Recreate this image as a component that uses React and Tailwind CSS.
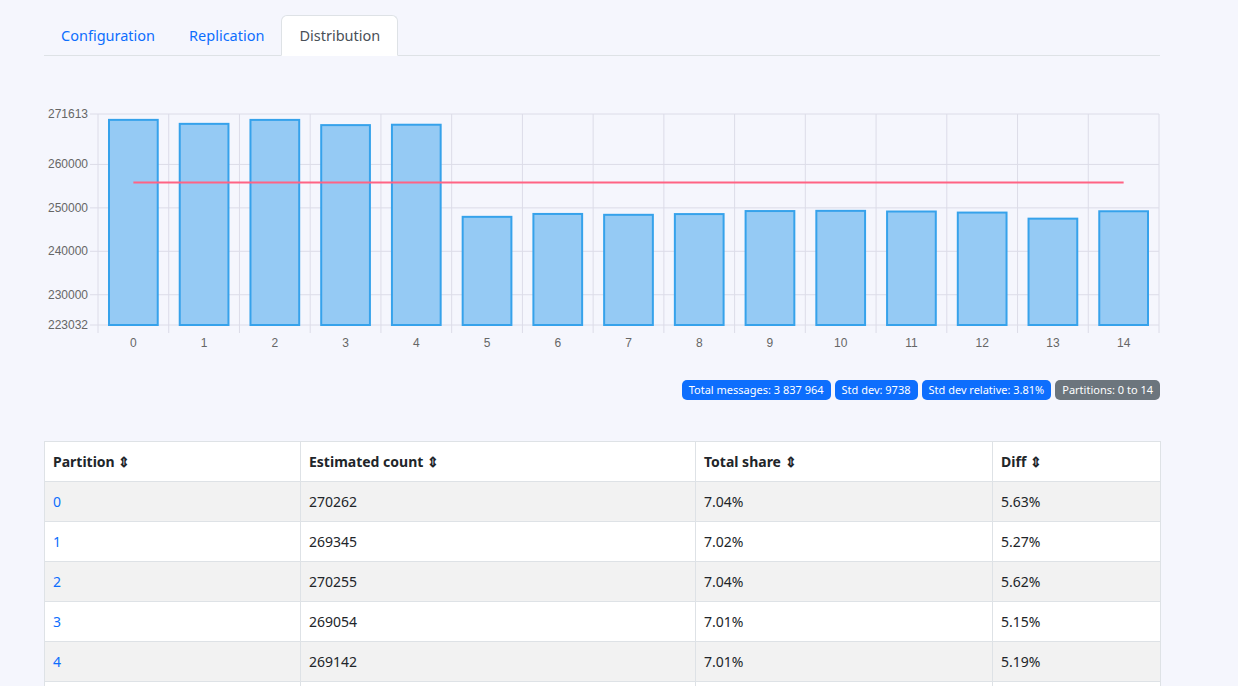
import React from "react";

const rows = [
  [270262, "7.04%", "5.63%"], [269345, "7.02%", "5.27%"], [270255, "7.04%", "5.62%"],
  [269054, "7.01%", "5.15%"], [269142, "7.01%", "5.19%"], [247935, "6.46%", "-3.10%"],
  [248602, "6.48%", "-2.84%"], [248402, "6.47%", "-2.92%"], [248571, "6.48%", "-2.85%"],
  [249268, "6.49%", "-2.58%"], [249313, "6.50%", "-2.56%"], [249160, "6.49%", "-2.62%"],
  [248918, "6.49%", "-2.71%"], [247518, "6.45%", "-3.26%"], [249219, "6.49%", "-2.60%"],
];

const X0 = 54, X1 = 1115, YT = 14, YB = 225;
const vmin = 223032, vmax = 271613;
const yv = (v) => YB - ((v - vmin) / (vmax - vmin)) * (YB - YT);
const cw = (X1 - X0) / 15;

function Chart() {
  const ticks = [271613, 260000, 250000, 240000, 230000, 223032];
  const mean = 3837964 / 15;
  return (
    <svg width="1116" height="250" className="block" style={{ fontFamily: '"Liberation Sans", Arial, sans-serif' }}>
      {ticks.map((t) => (
        <g key={t}>
          <line x1={X0 - 8} x2={X1} y1={yv(t)} y2={yv(t)} stroke="#dcdce8" />
          <text x={X0 - 10} y={yv(t) + 4} textAnchor="end" fontSize="12" fill="#666">{t}</text>
        </g>
      ))}
      {Array.from({ length: 16 }).map((_, i) => (
        <line key={i} x1={X0 + i * cw} x2={X0 + i * cw} y1={YT} y2={YB + 8} stroke="#dcdce8" />
      ))}
      {rows.map((r, i) => (
        <g key={i}>
          <rect x={X0 + i * cw + 11} y={yv(r[0])} width={cw - 22} height={YB - yv(r[0])} fill="#95caf4" stroke="#36a2eb" strokeWidth="2" />
          <text x={X0 + i * cw + cw / 2} y={YB + 22} textAnchor="middle" fontSize="12" fill="#666">{i}</text>
        </g>
      ))}
      <line x1={X0 + cw / 2} x2={X0 + 14.5 * cw} y1={yv(mean)} y2={yv(mean)} stroke="#ff6384" strokeWidth="2" />
    </svg>
  );
}

export default function App() {
  const font = { fontFamily: '"Noto Sans", "Open Sans", sans-serif' };
  return (
    <div className="min-h-[686px] bg-[#f5f6fd] px-[44px] pt-[15px]" style={font}>
      <div className="w-[1116px]">
        <div className="flex border-b border-[#dee2e6] h-[41px] text-[14.5px]">
          <div className="px-[17px] flex items-center text-[#0d6efd] -mb-px">Configuration</div>
          <div className="px-[17px] flex items-center text-[#0d6efd] -mb-px">Replication</div>
          <div className="px-[17px] flex items-center text-[#495057] bg-white border border-[#dee2e6] border-b-white rounded-t-md -mb-px">Distribution</div>
        </div>
        <div className="mt-[44px]"><Chart /></div>
        <div className="flex justify-end gap-[4px] mt-[30px] text-[11px] text-white">
          <span className="bg-[#0d6efd] rounded-[5px] px-[7px] h-[20px] flex items-center">Total messages: 3 837 964</span>
          <span className="bg-[#0d6efd] rounded-[5px] px-[7px] h-[20px] flex items-center">Std dev: 9738</span>
          <span className="bg-[#0d6efd] rounded-[5px] px-[7px] h-[20px] flex items-center">Std dev relative: 3.81%</span>
          <span className="bg-[#6c757d] rounded-[5px] px-[7px] h-[20px] flex items-center">Partitions: 0 to 14</span>
        </div>
        <table className="mt-[41px] w-[1116px] border-collapse text-[14px] text-[#212529] table-fixed">
          <colgroup>
            <col className="w-[256px]" /><col className="w-[395px]" /><col className="w-[297px]" /><col className="w-[168px]" />
          </colgroup>
          <thead>
            <tr className="bg-white h-[40px]">
              {["Partition ⇕", "Estimated count ⇕", "Total share ⇕", "Diff ⇕"].map((h) => (
                <th key={h} className="border border-[#dee2e6] text-left font-bold px-[8px]">{h}</th>
              ))}
            </tr>
          </thead>
          <tbody>
            {rows.map((r, i) => (
              <tr key={i} className={`h-[40px] ${i % 2 === 0 ? "bg-[#f2f2f2]" : "bg-white"}`}>
                <td className="border border-[#dee2e6] px-[8px] text-[#0d6efd]">{i}</td>
                <td className="border border-[#dee2e6] px-[8px]">{r[0]}</td>
                <td className="border border-[#dee2e6] px-[8px]">{r[1]}</td>
                <td className="border border-[#dee2e6] px-[8px]">{r[2]}</td>
              </tr>
            ))}
          </tbody>
        </table>
      </div>
    </div>
  );
}
